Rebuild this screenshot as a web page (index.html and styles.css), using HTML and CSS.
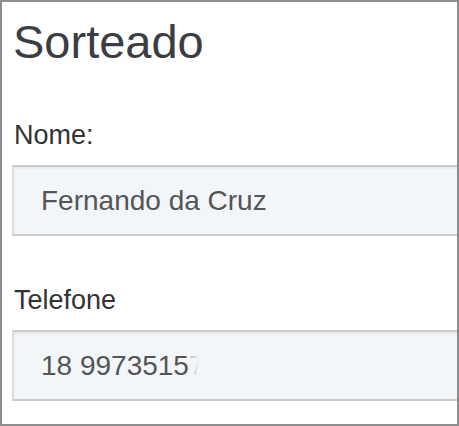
FILE: index.html
```html
<!DOCTYPE html>
<html lang="pt">
<head>
<meta charset="utf-8">
<title>Sorteado</title>
<link rel="stylesheet" href="styles.css">
</head>
<body>
<div class="frame">
  <h3 class="title">Sorteado</h3>
  <div class="group">
    <label class="label">Nome:</label>
    <div class="field">Fernando da Cruz</div>
  </div>
  <div class="group group-second">
    <label class="label">Telefone</label>
    <div class="field">18 9973515<span class="faded">7</span></div>
  </div>
</div>
</body>
</html>
```
FILE: styles.css
```css
html, body {
  margin: 0;
  padding: 0;
  background: #ffffff;
}

.frame {
  box-sizing: border-box;
  width: 459px;
  height: 426px;
  border: 2px solid #8d8d8d;
  overflow: hidden;
  padding: 14px 0 0 10px;
  font-family: "Liberation Sans", Arial, sans-serif;
}

.title {
  margin: 0 0 48px 1px;
  font-size: 47px;
  line-height: 52px;
  font-weight: normal;
  color: #3a3e42;
}

.group {
  display: flex;
  flex-direction: column;
}

.group-second {
  margin-top: 45px;
}

.label {
  display: block;
  margin: 0 0 11px 2px;
  font-size: 27px;
  line-height: 38px;
  color: #333333;
}

.field {
  box-sizing: border-box;
  width: 470px;
  height: 71px;
  display: flex;
  align-items: center;
  padding: 0 0 0 27px;
  background: #f3f6f9;
  border-top: 2px solid #cbcbcb;
  border-bottom: 2px solid #cbcbcb;
  border-left: 2px solid #dcdcdc;
  box-shadow: inset 0 2px 2px rgba(0, 0, 0, 0.05);
  font-size: 28px;
  color: #555555;
}

.faded {
  background: linear-gradient(to right, #b9bbbd 0%, #dfe2e5 45%, #f3f6f9 65%);
  -webkit-background-clip: text;
  background-clip: text;
  color: transparent;
}
```
